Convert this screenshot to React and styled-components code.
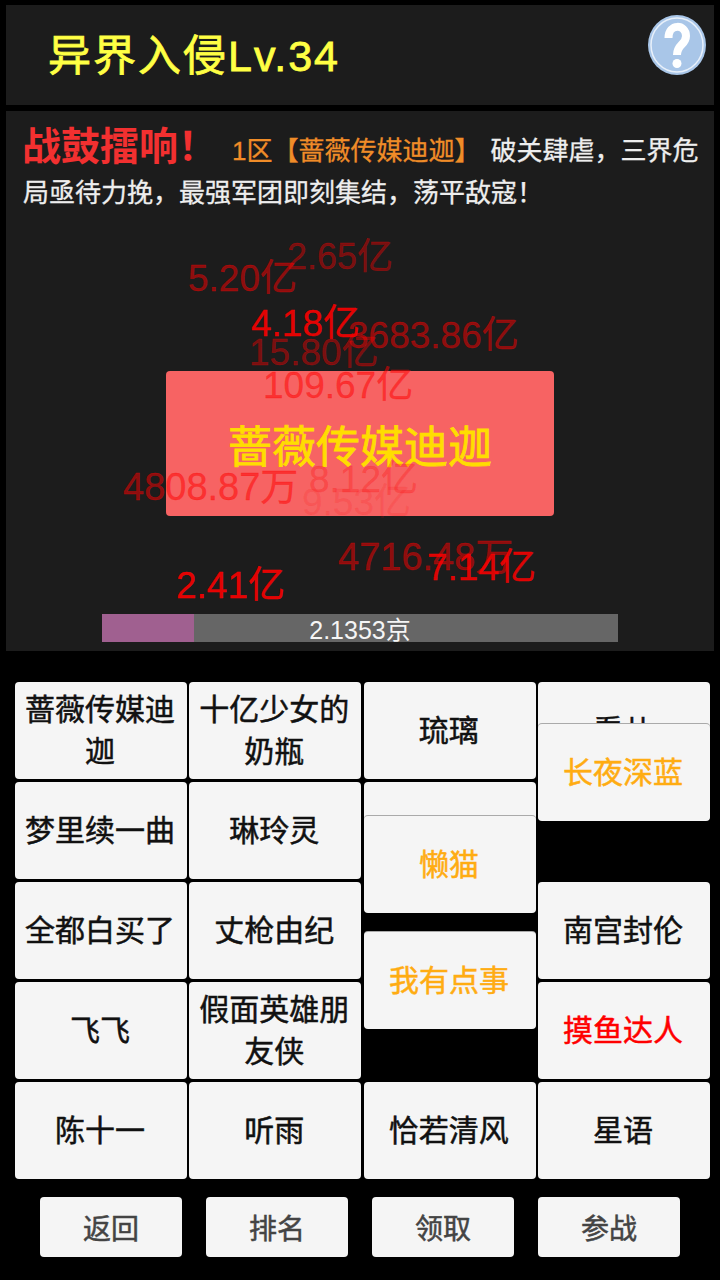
import React from "react";
import styled, { createGlobalStyle } from "styled-components";

const GlobalStyle = createGlobalStyle`
  html, body {
    margin: 0;
    background: #000;
  }
  body {
    font-family: "Liberation Sans", "Noto Sans CJK SC", sans-serif;
  }
`;

const Page = styled.div`
  width: 720px;
  height: 1280px;
  box-sizing: border-box;
  padding: 5px 6px 0;
  background: #000;
  display: flex;
  flex-direction: column;
  overflow: hidden;
`;

const Header = styled.div`
  height: 100px;
  flex-shrink: 0;
  background: #1c1c1c;
  display: flex;
  align-items: flex-start;
  justify-content: space-between;
  padding: 0 8px 0 42px;
  box-sizing: border-box;
`;

const Title = styled.h1`
  margin: 27px 0 0;
  font-size: 43px;
  line-height: 48px;
  letter-spacing: 2px;
  font-weight: 400;
  color: #ffff44;
  -webkit-text-stroke: 0.8px #ffff44;
`;

const HelpIcon = styled.svg`
  width: 58px;
  height: 60px;
  margin-top: 10px;
`;

const Battle = styled.div`
  position: relative;
  height: 540px;
  flex-shrink: 0;
  margin-top: 6px;
  background: #1c1c1c;
`;

const Notice = styled.p`
  margin: 0;
  padding: 15px 12px 0 17px;
  font-size: 26px;
  line-height: 42px;
  color: #eeeeee;
  -webkit-text-stroke: 0.3px #eeeeee;
`;

const Shout = styled.span`
  margin: 0 15px 0 -1px;
  font-size: 39px;
  font-weight: 700;
  color: #f23030;
  -webkit-text-stroke: 0;
`;

const Highlight = styled.span`
  color: #f08c28;
  -webkit-text-stroke: 0.3px #f08c28;
  margin-right: 10px;
`;

const Boss = styled.div`
  position: absolute;
  left: 160px;
  top: 260px;
  width: 388px;
  height: 145px;
  border-radius: 4px;
  background: #f76363;
  display: flex;
  align-items: center;
  justify-content: center;
  font-size: 44px;
  color: #ffdd00;
  -webkit-text-stroke: 0.8px #ffdd00;
`;

const Damage = styled.span`
  position: absolute;
  left: ${(p) => p.$x}px;
  top: ${(p) => p.$y}px;
  font-size: ${(p) => p.$size || 37}px;
  line-height: 40px;
  white-space: nowrap;
  color: rgba(255, 0, 0, ${(p) => p.$alpha});
  -webkit-text-stroke: 0.3px rgba(255, 0, 0, ${(p) => p.$alpha});
`;

const Progress = styled.div`
  position: absolute;
  left: 96px;
  top: 503px;
  width: 516px;
  height: 28px;
  background: #666666;
  display: flex;
  align-items: center;
  justify-content: center;
  font-size: 25px;
  color: #f5f5f5;
`;

const ProgressFill = styled.div`
  position: absolute;
  left: 0;
  top: 0;
  bottom: 0;
  background: #a06090;
`;

const ProgressLabel = styled.span`
  position: relative;
`;

const Board = styled.div`
  position: relative;
  margin: 31px 4px 0 9px;
  display: grid;
  grid-template-columns: repeat(4, 172px);
  grid-auto-rows: 97px;
  column-gap: 2.33px;
  row-gap: 3px;
`;

const Card = styled.div`
  box-sizing: border-box;
  border-radius: 4px;
  background: #f5f5f5;
  display: flex;
  align-items: center;
  justify-content: center;
  text-align: center;
  padding: 0 10px 0 8px;
  font-size: 30px;
  line-height: 42px;
  color: ${(p) => p.$color || "#111111"};
  -webkit-text-stroke: 0.5px ${(p) => p.$color || "#111111"};
`;

const Gap = styled.div``;

const Falling = styled(Card)`
  position: absolute;
  left: ${(p) => p.$x}px;
  top: ${(p) => p.$y}px;
  width: 172px;
  height: 97px;
  box-shadow: 0 -1px 0 #aaa;
`;

const Actions = styled.div`
  margin: 18px 0 0 34px;
  display: flex;
  gap: 24px;
`;

const ActionButton = styled.button`
  width: 142px;
  height: 60px;
  border: 0;
  border-radius: 4px;
  padding: 0;
  background: #f5f5f5;
  font-family: inherit;
  font-size: 28px;
  color: #444444;
  -webkit-text-stroke: 0.5px #444444;
`;

const damages = [
  { text: "2.65亿", x: 281, y: 126, alpha: 0.42, size: 36 },
  { text: "5.20亿", x: 182, y: 148, alpha: 0.5 },
  { text: "4.18亿", x: 245, y: 193, alpha: 0.88 },
  { text: "3683.86亿", x: 342, y: 205, alpha: 0.5 },
  { text: "15.80亿", x: 243, y: 222, alpha: 0.42 },
  { text: "109.67亿", x: 257, y: 255, alpha: 0.5 },
  { text: "4808.87万", x: 117, y: 356, alpha: 0.5, size: 38 },
  { text: "8.12亿", x: 303, y: 349, alpha: 0.25 },
  { text: "9.53亿", x: 296, y: 372, alpha: 0.12 },
  { text: "4716.48万", x: 332, y: 426, alpha: 0.5, size: 38 },
  { text: "7.14亿", x: 421, y: 437, alpha: 0.85 },
  { text: "2.41亿", x: 170, y: 455, alpha: 0.9 },
];

const cards = [
  { name: "蔷薇传媒迪迦" },
  { name: "十亿少女的奶瓶" },
  { name: "琉璃" },
  { name: "看儿" },
  { name: "梦里续一曲" },
  { name: "琳玲灵" },
  { name: "" },
  null,
  { name: "全都白买了" },
  { name: "丈枪由纪" },
  null,
  { name: "南宫封伦" },
  { name: "飞飞" },
  { name: "假面英雄朋友侠" },
  null,
  { name: "摸鱼达人", color: "#ff0000" },
  { name: "陈十一" },
  { name: "听雨" },
  { name: "恰若清风" },
  { name: "星语" },
];

const falling = [
  { name: "长夜深蓝", x: 523, y: 42 },
  { name: "懒猫", x: 349, y: 134 },
  { name: "我有点事", x: 349, y: 250 },
];

export default function App() {
  return (
    <Page>
      <GlobalStyle />
      <Header>
        <Title>异界入侵Lv.34</Title>
        <HelpIcon viewBox="0 0 58 60">
          <ellipse cx="29" cy="30" rx="29" ry="30" fill="#a9c6e8" />
          <ellipse cx="29" cy="30" rx="26" ry="27" fill="none" stroke="#e8f0fa" strokeWidth="1.5" />
          <path
            d="M20.5 23 C20.5 8 38 9 38 21 C38 30 29 29 29 40"
            fill="none"
            stroke="#fff"
            strokeWidth="8"
          />
          <circle cx="29" cy="48.5" r="4.5" fill="#fff" />
        </HelpIcon>
      </Header>
      <Battle>
        <Notice>
          <Shout>战鼓擂响！</Shout>
          <Highlight>1区【蔷薇传媒迪迦】</Highlight>
          破关肆虐，三界危局亟待力挽，最强军团即刻集结，荡平敌寇！
        </Notice>
        <Boss>蔷薇传媒迪迦</Boss>
        {damages.map((d) => (
          <Damage key={d.text} $x={d.x} $y={d.y} $alpha={d.alpha} $size={d.size}>
            {d.text}
          </Damage>
        ))}
        <Progress>
          <ProgressFill style={{ width: "17.8%" }} />
          <ProgressLabel>2.1353京</ProgressLabel>
        </Progress>
      </Battle>
      <Board>
        {cards.map((c, i) =>
          c ? (
            <Card key={i} $color={c.color}>
              {c.name}
            </Card>
          ) : (
            <Gap key={i} />
          )
        )}
        {falling.map((c) => (
          <Falling key={c.name} $x={c.x} $y={c.y} $color="#ffac12">
            {c.name}
          </Falling>
        ))}
      </Board>
      <Actions>
        <ActionButton>返回</ActionButton>
        <ActionButton>排名</ActionButton>
        <ActionButton>领取</ActionButton>
        <ActionButton>参战</ActionButton>
      </Actions>
    </Page>
  );
}
